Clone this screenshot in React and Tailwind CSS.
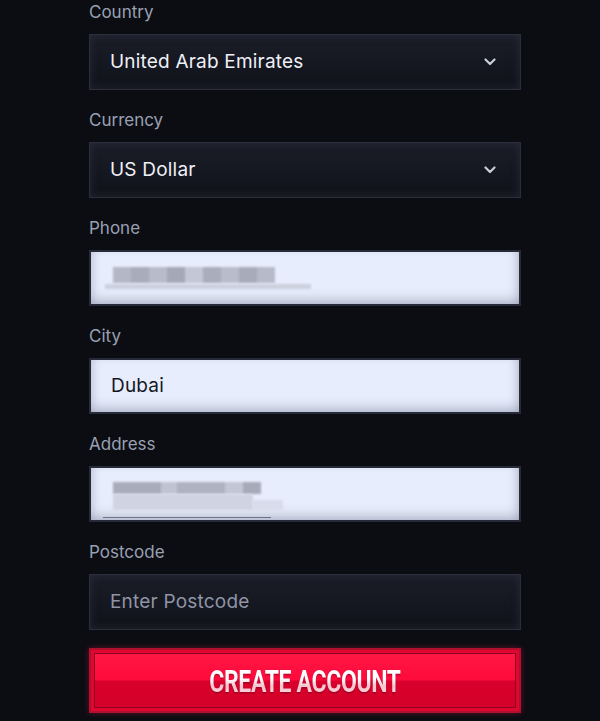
import React from "react";

const font = { fontFamily: "Inter, 'Noto Sans', sans-serif" };

function Label({ children }) {
  return (
    <div className="h-[24px] mb-[10px] text-[17px] leading-[24px] text-[#9aa0b2]" style={font}>
      {children}
    </div>
  );
}

function DarkBox({ children }) {
  return (
    <div className="relative h-[56px] w-full border border-[#2b2e3b] bg-gradient-to-b from-[#1a1c27] to-[#11131b] shadow-[inset_0_0_10px_rgba(90,95,120,0.25)] flex items-center px-[20px]">
      {children}
    </div>
  );
}

function LightBox({ children }) {
  return (
    <div className="relative h-[56px] w-full border-2 border-[#272a38] bg-[#e7edfc] shadow-[inset_0_-10px_12px_-6px_rgba(120,125,150,0.45),inset_-8px_0_10px_-6px_rgba(120,125,150,0.4),inset_8px_0_10px_-6px_rgba(120,125,150,0.3)] flex items-center px-[20px] overflow-hidden">
      {children}
    </div>
  );
}

function Chevron() {
  return (
    <svg className="absolute right-[24px] top-1/2 -translate-y-1/2" width="12" height="8" viewBox="0 0 12 8">
      <path d="M1.5 1.5 L6 6 L10.5 1.5" fill="none" stroke="#c9cdd9" strokeWidth="2.2" strokeLinecap="round" strokeLinejoin="round" />
    </svg>
  );
}

function Field({ label, children, last }) {
  return (
    <div className={last ? "" : "mb-[18px]"}>
      <Label>{label}</Label>
      {children}
    </div>
  );
}

export default function App() {
  return (
    <div className="w-[600px] h-[721px] bg-[#0b0d13] overflow-hidden relative">
      <div className="ml-[89px] w-[432px]">
        <Field label="Country">
          <DarkBox>
            <span className="text-[19px] tracking-[0.2px] text-[#eef0f6]" style={font}>United Arab Emirates</span>
            <Chevron />
          </DarkBox>
        </Field>
        <Field label="Currency">
          <DarkBox>
            <span className="text-[19px] tracking-[0.2px] text-[#eef0f6]" style={font}>US Dollar</span>
            <Chevron />
          </DarkBox>
        </Field>
        <Field label="Phone">
          <LightBox>
            <div className="absolute left-[22px] top-[15px] flex blur-[1px]">
              <div className="w-[18px] h-[16px] bg-[#b4b8c6]" />
              <div className="w-[18px] h-[16px] bg-[#a9adbb]" />
              <div className="w-[18px] h-[16px] bg-[#b8bcca]" />
              <div className="w-[18px] h-[16px] bg-[#a5a9b7]" />
              <div className="w-[18px] h-[16px] bg-[#c4c8d6]" />
              <div className="w-[18px] h-[16px] bg-[#aaaebc]" />
              <div className="w-[18px] h-[16px] bg-[#b9bdcb]" />
              <div className="w-[18px] h-[16px] bg-[#a8acba]" />
              <div className="w-[18px] h-[16px] bg-[#b7bbc9]" />
            </div>
            <div className="absolute left-[14px] top-[32px] w-[206px] h-[5px] bg-[#ccd0de] blur-[1px]" />
          </LightBox>
        </Field>
        <Field label="City">
          <LightBox>
            <span className="text-[19px] tracking-[0.2px] text-[#15171f]" style={font}>Dubai</span>
          </LightBox>
        </Field>
        <Field label="Address">
          <LightBox>
            <div className="absolute left-[22px] top-[14px] flex blur-[1px]">
              <div className="w-[48px] h-[12px] bg-[#a9adbb]" />
              <div className="w-[16px] h-[12px] bg-[#c0c4d2]" />
              <div className="w-[48px] h-[12px] bg-[#afb3c1]" />
              <div className="w-[18px] h-[12px] bg-[#c3c7d5]" />
              <div className="w-[18px] h-[12px] bg-[#a7abb9]" />
            </div>
            <div className="absolute left-[22px] top-[26px] w-[140px] h-[16px] bg-[#d0d4e2] blur-[1px]" />
            <div className="absolute left-[162px] top-[32px] w-[30px] h-[10px] bg-[#d8dceb] blur-[1px]" />
            <div className="absolute left-[12px] top-[49px] w-[168px] h-[1px] bg-[#6e7282]" />
          </LightBox>
        </Field>
        <Field label="Postcode">
          <DarkBox>
            <span className="text-[19px] tracking-[0.2px] text-[#8f95a6]" style={font}>Enter Postcode</span>
          </DarkBox>
        </Field>
        <div className="mt-[18px] h-[65px] w-full border-2 border-[#b0102f] p-[3px] bg-[#e0062f] shadow-[0_0_6px_rgba(255,30,70,0.35)]">
          <div className="h-full w-full border border-[#8a0422] flex items-center justify-center bg-[linear-gradient(to_bottom,#ff1744_0%,#ff0a3c_48%,#d8002c_52%,#d4002a_100%)]">
            <span
              className="inline-block scale-x-[0.72] text-[32px] font-bold tracking-[-0.5px] text-transparent bg-clip-text bg-[linear-gradient(to_bottom,#ffffff_0%,#ffffff_45%,#f6c4cf_60%,#ffe6ec_100%)] drop-shadow-[0_1px_1px_rgba(90,0,20,0.6)]"
              style={{ fontFamily: "Roboto, 'Liberation Sans', sans-serif" }}
            >
              CREATE ACCOUNT
            </span>
          </div>
        </div>
      </div>
    </div>
  );
}
